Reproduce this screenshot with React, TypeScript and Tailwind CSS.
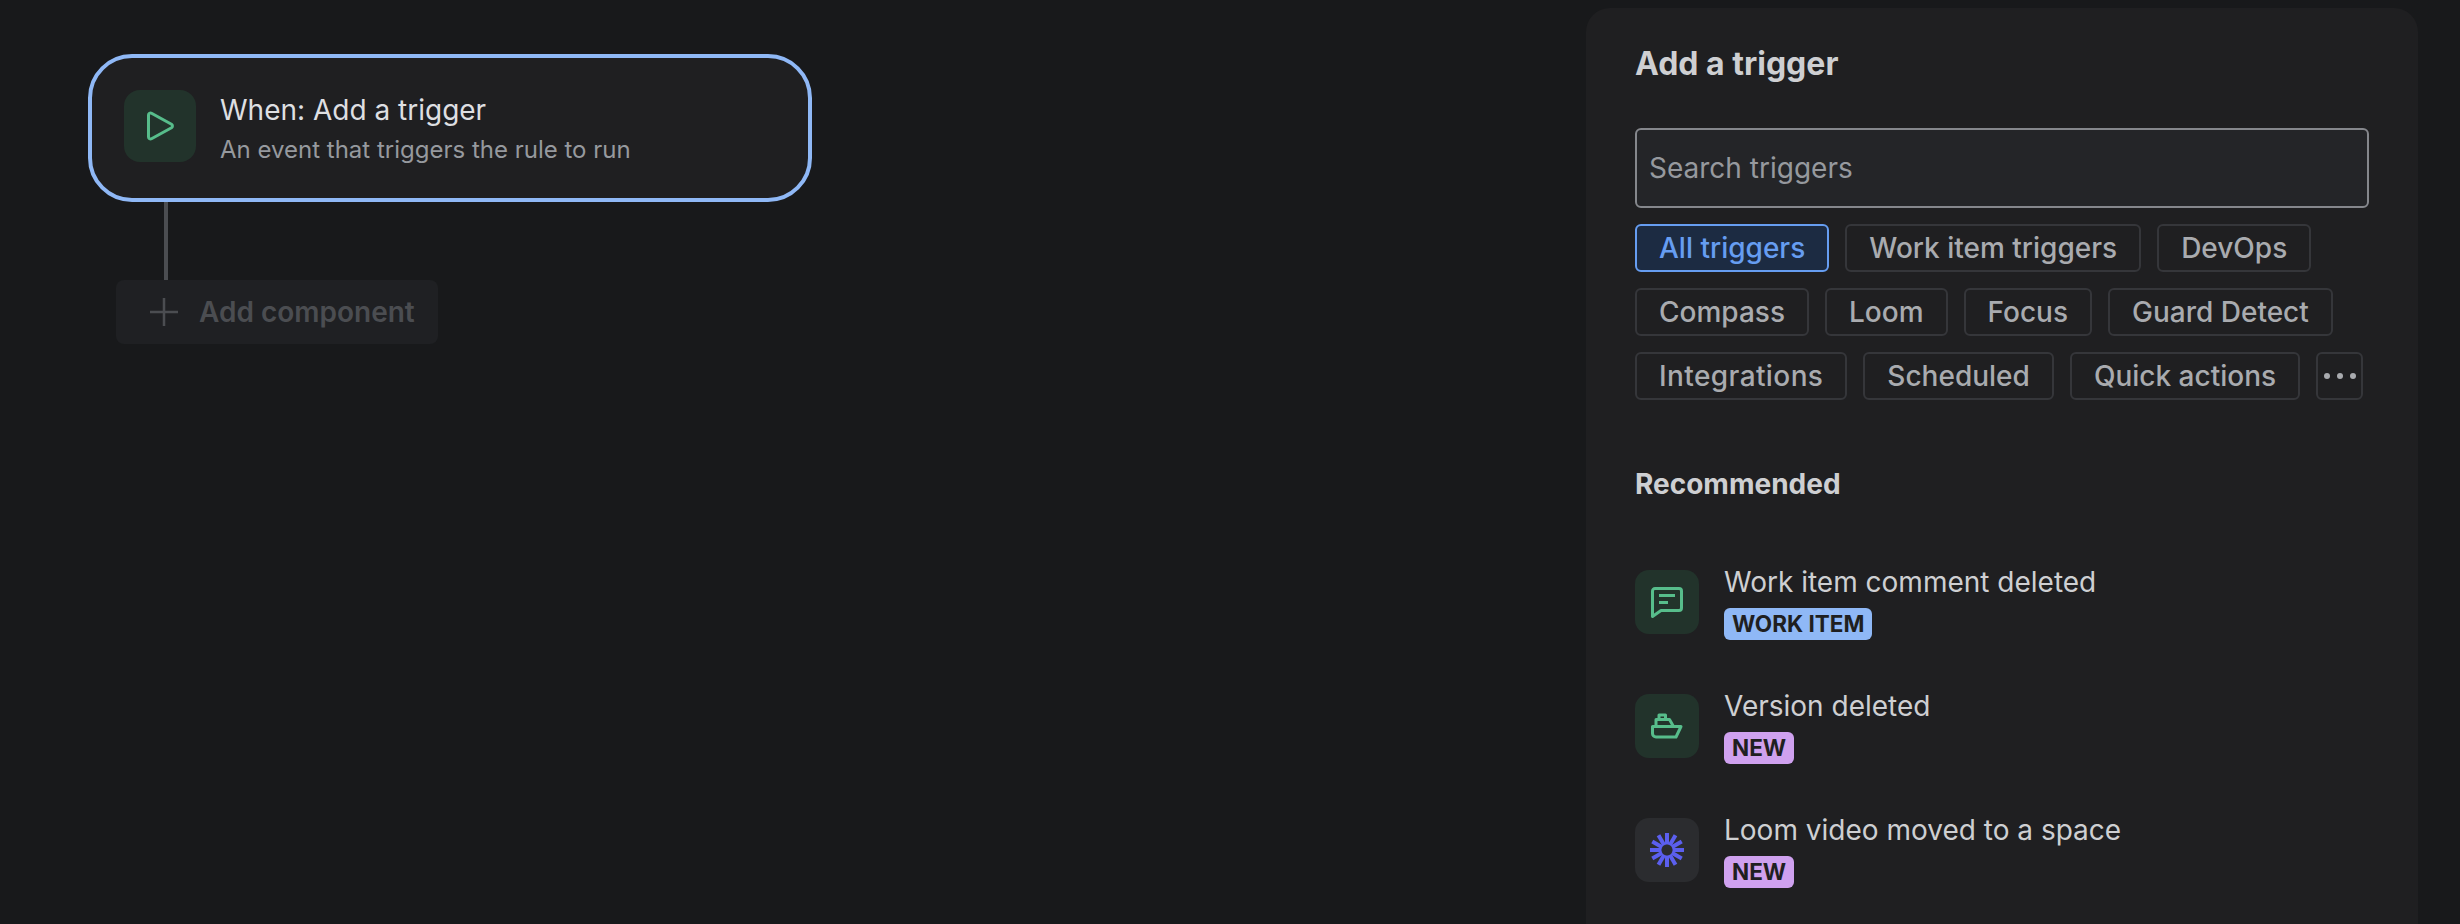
const filters = [
  "Work item triggers",
  "DevOps",
  "Compass",
  "Loom",
  "Focus",
  "Guard Detect",
  "Integrations",
  "Scheduled",
  "Quick actions",
];

function PlayIcon() {
  return (
    <svg width="32" height="32" viewBox="0 0 32 32" fill="none" stroke="#57BD8B" strokeWidth="3" strokeLinejoin="round">
      <path d="M4.5 5a2 2 0 0 1 3-1.700L27.500 14.300a2 2 0 0 1 0 3.400L7.500 28.700a2 2 0 0 1-3-1.700Z" />
    </svg>
  );
}

function CommentIcon() {
  return (
    <svg width="32" height="32" viewBox="0 0 32 32" fill="none" stroke="#57BD8B" strokeWidth="3" strokeLinejoin="round">
      <path d="M4 2.500h24a2.500 2.500 0 0 1 2.500 2.500v17a2.500 2.500 0 0 1-2.500 2.500H10l-8.500 6V5A2.500 2.500 0 0 1 4 2.500Z" />
      <path d="M8 9.500h16M8 16.500h9" />
    </svg>
  );
}

function ShipIcon() {
  return (
    <svg width="32" height="32" viewBox="0 0 32 32" fill="none" stroke="#57BD8B" strokeWidth="3" strokeLinejoin="round">
      <path d="M8 9V5h6.500v4" />
      <path d="M5 16.500V9.500h13.500l4 7" />
      <path d="M1.500 16.500h28.500l-5 10.500H5a3.500 3.500 0 0 1-3.500-3.500Z" />
    </svg>
  );
}

function LoomIcon() {
  const rays = [0, 30, 60, 90, 120, 150, 180, 210, 240, 270, 300, 330];
  return (
    <svg width="36" height="36" viewBox="0 0 36 36" fill="none" stroke="#5B5FEE" strokeWidth="4">
      {rays.map((a) => (
        <line key={a} x1="18" y1="1" x2="18" y2="12.500" transform={`rotate(${a} 18 18)`} />
      ))}
    </svg>
  );
}

function Filter({ label, active }: { label: string; active?: boolean }) {
  const base = "h-[48px] rounded-[6px] border-2 px-[22px] text-[28px] font-medium leading-none";
  if (active) {
    return (
      <button type="button" className={`${base} border-[#669DF1] bg-[#1C2B42] text-[#669DF1]`}>
        {label}
      </button>
    );
  }
  return (
    <button
      type="button"
      className={`${base} border-[#35363A] text-[#A9ABAF] ${label === "Integrations" ? "tracking-[0.4px]" : ""}`}
    >
      {label}
    </button>
  );
}

function TriggerRow({
  icon,
  tile,
  title,
  badge,
  badgeColor,
}: {
  icon: React.ReactNode;
  tile: string;
  title: string;
  badge: string;
  badgeColor: string;
}) {
  return (
    <div className="flex h-[124px] items-start">
      <div className={`mt-[2px] flex h-[64px] w-[64px] shrink-0 items-center justify-center rounded-[14px] ${tile}`}>{icon}</div>
      <div className="ml-[25px]">
        <div className="h-[40px] text-[28px] leading-[28px] text-[#CECFD2]">{title}</div>
        <span className={`flex h-[32px] w-fit items-center rounded-[6px] px-[8px] text-[22.500px] font-bold text-[#1F1F21] ${badgeColor}`}>
          {badge}
        </span>
      </div>
    </div>
  );
}

export default function App() {
  return (
    <div className="flex h-[924px] w-[2460px] overflow-hidden bg-[#18191B] font-['Inter',sans-serif]">
      <div className="flex-1 pl-[88px] pt-[54px]">
        <div className="flex h-[148px] w-[724px] items-start gap-[24px] rounded-[44px] border-4 border-[#8FB8F6] bg-[#1F1F21] pl-[32px] pt-[32px]">
          <div className="flex h-[72px] w-[72px] items-center justify-center rounded-[16px] bg-[#22332B]">
            <PlayIcon />
          </div>
          <div>
            <div className="text-[28px] leading-[40px] text-[#DEDFE2]">When: Add a trigger</div>
            <div className="mt-[2px] text-[24px] leading-[36px] text-[#96999E]">An event that triggers the rule to run</div>
          </div>
        </div>
        <div className="ml-[76px] h-[78px] w-[4px] bg-[#4B4D51]" />
        <div className="ml-[28px] flex h-[64px] w-[322px] items-center rounded-[8px] bg-[#1F2023] pl-[32px] text-[28px] font-semibold text-[#4B4D51]">
          <svg width="32" height="32" viewBox="0 0 32 32" fill="none" stroke="#4B4D51" strokeWidth="2.500">
            <path d="M16 2v28M2 16h28" />
          </svg>
          <span className="ml-[19px]">Add component</span>
        </div>
      </div>

      <div className="mr-[42px] mt-[8px] h-[916px] w-[832px] rounded-t-[24px] bg-[#1F1F21] pl-[49px] pr-[49px]">
        <h1 className="mt-[33px] text-[32px] font-bold leading-[46px] text-[#CECFD2]">Add a trigger</h1>
        <input
          placeholder="Search triggers"
          className="mt-[41px] block h-[80px] w-full rounded-[6px] border-2 border-[#85878C] bg-[#242528] px-[12px] text-[28px] placeholder:text-[#96999E]"
        />
        <div className="mt-[16px] flex flex-wrap gap-[16px]">
          <Filter label="All triggers" active />
          {filters.map((f) => (
            <Filter key={f} label={f} />
          ))}
          <button
            type="button"
            className="flex h-[48px] w-[47px] items-center justify-center gap-[7px] rounded-[6px] border-2 border-[#35363A]"
          >
            <span className="h-[6px] w-[6px] rounded-full bg-[#A9ABAF]" />
            <span className="h-[6px] w-[6px] rounded-full bg-[#A9ABAF]" />
            <span className="h-[6px] w-[6px] rounded-full bg-[#A9ABAF]" />
          </button>
        </div>
        <h2 className="mt-[64px] text-[28px] font-bold leading-[40px] text-[#CECFD2]">Recommended</h2>
        <div className="mt-[64px]">
          <TriggerRow
            icon={<CommentIcon />}
            tile="bg-[#22332B]"
            title="Work item comment deleted"
            badge="WORK ITEM"
            badgeColor="bg-[#8FB8F6]"
          />
          <TriggerRow
            icon={<ShipIcon />}
            tile="bg-[#22332B]"
            title="Version deleted"
            badge="NEW"
            badgeColor="bg-[#CFA1EF]"
          />
          <TriggerRow
            icon={<LoomIcon />}
            tile="bg-[#2B2C2F]"
            title="Loom video moved to a space"
            badge="NEW"
            badgeColor="bg-[#CFA1EF]"
          />
        </div>
      </div>
    </div>
  );
}
